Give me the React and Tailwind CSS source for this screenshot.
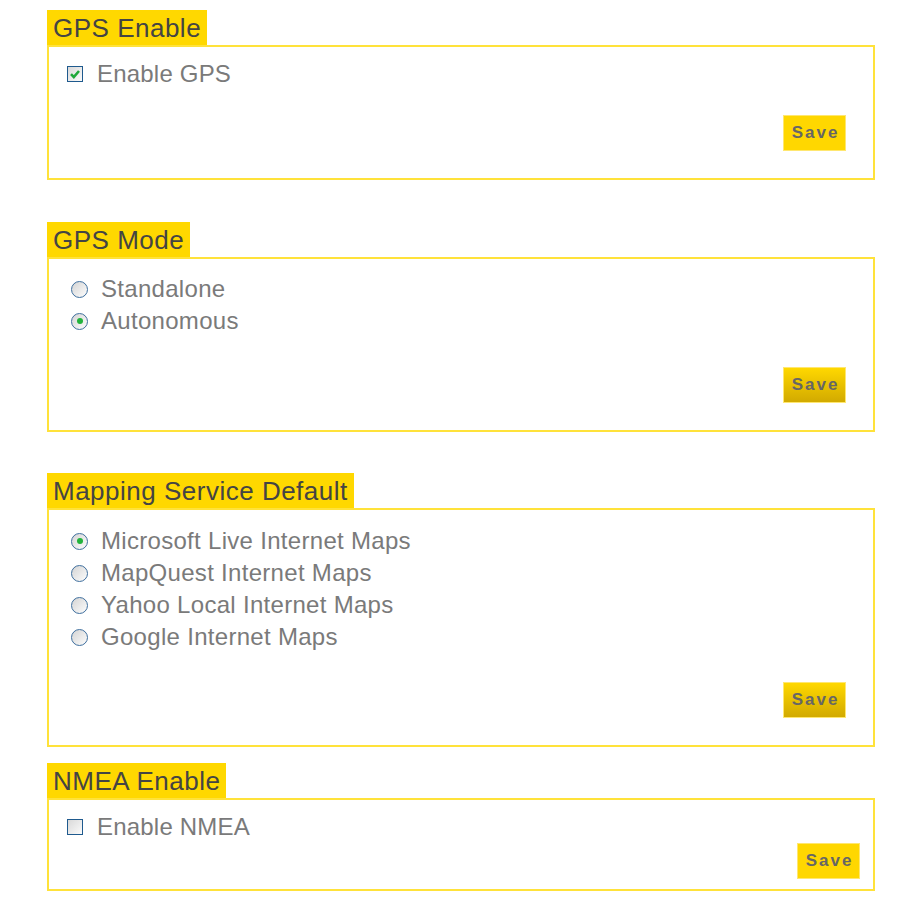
import { useState } from "react";

const FONT = { fontFamily: '"Liberation Sans", Arial, sans-serif' };

function Checkbox({ checked, onChange }) {
  return (
    <span
      onClick={onChange}
      className="w-[16px] h-[16px] border border-[#1f5a8e] bg-gradient-to-br from-[#d9d9d9] to-[#fbfbfb] flex items-center justify-center shrink-0 cursor-pointer"
    >
      {checked && (
        <svg viewBox="0 0 12 12" className="w-[12px] h-[12px]">
          <path d="M2 6.2 L4.8 9 L10 3" fill="none" stroke="#1fa83a" strokeWidth="2.6" />
        </svg>
      )}
    </span>
  );
}

function Radio({ checked, onChange }) {
  return (
    <span
      onClick={onChange}
      className="w-[17px] h-[17px] rounded-full border-[1.5px] border-[#3f6f9e] bg-gradient-to-br from-[#d4d4d4] to-[#fdfdfd] flex items-center justify-center shrink-0 cursor-pointer"
    >
      {checked && <span className="w-[6px] h-[6px] rounded-full bg-[#22b33c]" />}
    </span>
  );
}

function SaveButton({ flat }) {
  return (
    <button
      className={
        "w-[63px] h-[36px] border border-[#ffe770] text-[17px] font-bold tracking-[2px] text-[#666] flex items-center justify-center pl-[2px] " +
        (flat ? "bg-[#ffd700]" : "bg-gradient-to-b from-[#ffd800] to-[#d2aa00]")
      }
    >
      Save
    </button>
  );
}

function Section({ title, mt, height, pt, pb, pr, flat, children }) {
  return (
    <section className={mt}>
      <div className="inline-block h-[35px] bg-[#ffd800] px-[6px] text-[26px] leading-[36px] tracking-[0.5px] text-[#444]">
        {title}
      </div>
      <div className={"border-2 border-[#ffe23a] flex flex-col " + height + " " + pt + " " + pb + " " + pr}>
        {children}
        <div className="mt-auto flex justify-end">
          <SaveButton flat={flat} />
        </div>
      </div>
    </section>
  );
}

export default function App() {
  const [gps, setGps] = useState(true);
  const [nmea, setNmea] = useState(false);
  const [mode, setMode] = useState("Autonomous");
  const [map, setMap] = useState("Microsoft Live Internet Maps");

  const modes = ["Standalone", "Autonomous"];
  const maps = [
    "Microsoft Live Internet Maps",
    "MapQuest Internet Maps",
    "Yahoo Local Internet Maps",
    "Google Internet Maps",
  ];

  return (
    <div className="min-h-screen bg-white pt-[10px] pl-[47px]" style={FONT}>
      <div className="w-[828px]">
        <Section title="GPS Enable" mt="" height="h-[135px]" pt="pt-[11px]" pb="pb-[27px]" pr="pr-[27px]" flat>
          <label className="flex items-center h-[32px] pl-[18px] gap-[14px] text-[24px] tracking-[0.2px] text-[#7a7a7a]">
            <Checkbox checked={gps} onChange={() => setGps(!gps)} />
            Enable GPS
          </label>
        </Section>

        <Section title="GPS Mode" mt="mt-[42px]" height="h-[175px]" pt="pt-[14px]" pb="pb-[27px]" pr="pr-[27px]">
          {modes.map((m) => (
            <label key={m} className="flex items-center h-[32px] pl-[22px] gap-[13px] text-[24px] tracking-[0.3px] text-[#7a7a7a]">
              <Radio checked={mode === m} onChange={() => setMode(m)} />
              {m}
            </label>
          ))}
        </Section>

        <Section title="Mapping Service Default" mt="mt-[41px]" height="h-[239px]" pt="pt-[15px]" pb="pb-[27px]" pr="pr-[27px]">
          {maps.map((m) => (
            <label key={m} className="flex items-center h-[32px] pl-[22px] gap-[13px] text-[24px] tracking-[0.3px] text-[#7a7a7a]">
              <Radio checked={map === m} onChange={() => setMap(m)} />
              {m}
            </label>
          ))}
        </Section>

        <Section title="NMEA Enable" mt="mt-[16px]" height="h-[93px]" pt="pt-[11px]" pb="pb-[13px]" pr="pr-[13px]" flat>
          <label className="flex items-center h-[32px] pl-[18px] gap-[14px] text-[24px] tracking-[0.2px] text-[#7a7a7a]">
            <Checkbox checked={nmea} onChange={() => setNmea(!nmea)} />
            Enable NMEA
          </label>
        </Section>
      </div>
    </div>
  );
}
